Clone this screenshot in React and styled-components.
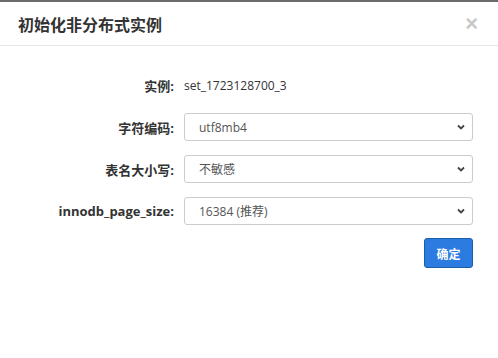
import React from "react";
import styled, { createGlobalStyle } from "styled-components";

const Global = createGlobalStyle`
  html, body { margin: 0; padding: 0; background: #fff; }
  body { font-family: "Open Sans", "Noto Sans CJK SC", sans-serif; }
`;

const Page = styled.div`
  width: 498px;
  height: 358px;
  display: flex;
  flex-direction: column;
  overflow: hidden;
`;

const BackStrip = styled.div`
  height: 2px;
  background: #6b6b6b;
  flex: none;
`;

const Dialog = styled.div`
  flex: 1;
  background: #fff;
  display: flex;
  flex-direction: column;
`;

const Header = styled.div`
  height: 43px;
  border-bottom: 1px solid #e5e5e5;
  display: flex;
  align-items: center;
  justify-content: space-between;
  padding: 0 18px;
`;

const Title = styled.h4`
  margin: 0;
  font-size: 16px;
  font-weight: 700;
  color: #333;
  font-family: "Noto Sans CJK SC", sans-serif;
`;

const Close = styled.span`
  font-size: 22px;
  color: #c8c8c8;
  font-family: "Liberation Sans", sans-serif;
  font-weight: 700;
  line-height: 1;
  margin-right: 2px;
`;

const Body = styled.div`
  padding: 25px 25px 0 0;
  display: flex;
  flex-direction: column;
  gap: 14px;
`;

const Row = styled.div`
  display: grid;
  grid-template-columns: 174px 1fr;
  column-gap: 10px;
  align-items: center;
  height: 28px;
`;

const Label = styled.label`
  text-align: right;
  font-size: 13px;
  font-weight: 700;
  color: #333;
  font-family: "Open Sans", "Noto Sans CJK SC", sans-serif;
`;

const Value = styled.span`
  font-size: 12px;
  color: #333;
  font-family: "Open Sans", "Noto Sans CJK SC", sans-serif;
`;

const SelectBox = styled.div`
  height: 28px;
  box-sizing: border-box;
  border: 1px solid #ccc;
  border-radius: 3px;
  display: flex;
  align-items: center;
  justify-content: space-between;
  padding: 0 6px 0 14px;
  font-size: 12px;
  color: #555;
  font-family: "Open Sans", "Noto Sans CJK SC", sans-serif;
`;

const Footer = styled.div`
  display: flex;
  justify-content: flex-end;
  padding: 0 25px 0 0;
  margin-top: 13px;
`;

const Button = styled.button`
  width: 49px;
  height: 30px;
  box-sizing: border-box;
  background: #2b7be0;
  border: 1px solid #1a5ea8;
  border-radius: 3px;
  color: #fff;
  font-size: 12px;
  font-weight: 700;
  font-family: "Noto Sans CJK SC", sans-serif;
  padding: 0;
`;

const Chevron = () => (
  <svg width="10" height="8" viewBox="0 0 10 8">
    <path d="M2 2.5 L5 5.5 L8 2.5" fill="none" stroke="#444" strokeWidth="1.8" />
  </svg>
);

const Select = ({ children }) => (
  <SelectBox>
    <span>{children}</span>
    <Chevron />
  </SelectBox>
);

export default function App() {
  return (
    <Page>
      <Global />
      <BackStrip />
      <Dialog>
        <Header>
          <Title>初始化非分布式实例</Title>
          <Close>×</Close>
        </Header>
        <Body>
          <Row>
            <Label>实例:</Label>
            <Value>set_1723128700_3</Value>
          </Row>
          <Row>
            <Label>字符编码:</Label>
            <Select>utf8mb4</Select>
          </Row>
          <Row>
            <Label>表名大小写:</Label>
            <Select>不敏感</Select>
          </Row>
          <Row>
            <Label>innodb_page_size:</Label>
            <Select>16384 (推荐)</Select>
          </Row>
        </Body>
        <Footer>
          <Button>确定</Button>
        </Footer>
      </Dialog>
    </Page>
  );
}
